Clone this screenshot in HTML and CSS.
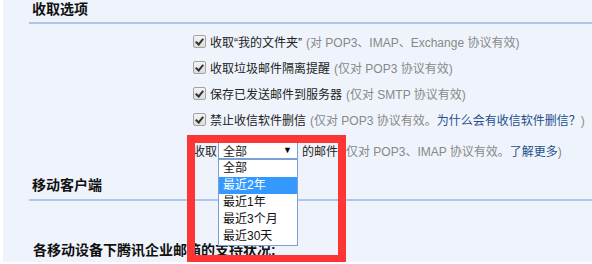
FILE: index.html
```html
<!DOCTYPE html>
<html lang="zh-CN">
<head>
    <meta charset="UTF-8">
    <title>收取选项</title>
    <link rel="stylesheet" href="styles.css">
</head>
<body>

<div class="page">
    <section class="group">
        <h2 class="group-title">收取选项</h2>
        <ul class="options">
            <li><span class="check"></span><span class="label">收取“我的文件夹”</span> <span class="hint">(对 POP3、IMAP、Exchange 协议有效)</span></li>
            <li><span class="check"></span><span class="label">收取垃圾邮件隔离提醒</span> <span class="hint">(仅对 POP3 协议有效)</span></li>
            <li><span class="check"></span><span class="label">保存已发送邮件到服务器</span> <span class="hint">(仅对 SMTP 协议有效)</span></li>
            <li><span class="check"></span><span class="label">禁止收信软件删信</span> <span class="hint">(仅对 POP3 协议有效。<a class="link">为什么会有收信软件删信？</a>)</span></li>
            <li class="range">
                <span class="label">收取</span>
                <div class="select">
                    <span class="select-value">全部</span>
                    <span class="select-arrow">▼</span>
                    <ul class="select-list">
                        <li>全部</li>
                        <li class="active">最近2年</li>
                        <li>最近1年</li>
                        <li>最近3个月</li>
                        <li>最近30天</li>
                    </ul>
                </div>
                <span class="label">的邮件</span>
                <span class="hint">(仅对 POP3、IMAP 协议有效。<a class="link">了解更多</a>)</span>
            </li>
        </ul>
    </section>

    <section class="group">
        <h2 class="group-title">移动客户端</h2>
        <p class="support">各移动设备下腾讯企业邮箱的支持状况:</p>
    </section>

    <!-- highlight box drawn over the screenshot -->
    <div class="callout"></div>
</div>

</body>
</html>
```

FILE: styles.css
```css
body {
    margin: 0;
    padding: 0;
    background-color: #fff;
    font-family: "Liberation Sans", "Noto Sans CJK SC", sans-serif;
    font-size: 12px;
    color: #222;
}
.page {
    position: relative;
    margin-left: 3px;
    height: 262px;
    background-color: #eff4fc;
    overflow: visible;
}
.group-title {
    margin: 0 0 0 26px;
    padding: 0 0 4px 3px;
    font-size: 14px;
    line-height: 18px;
    font-weight: bold;
    color: #111;
    border-bottom: 2px solid #a9c8ec;
}
.options {
    list-style: none;
    margin: 0;
    padding: 4px 0 0 190px;
}
.options > li {
    display: flex;
    align-items: center;
    height: 26px;
    white-space: nowrap;
}
.check {
    width: 11px;
    height: 11px;
    margin-right: 4px;
    border: 1px solid #a3a3a3;
    border-radius: 2px;
    background: linear-gradient(#f4f4f4, #dcdcdc);
    position: relative;
}
.check::after {
    content: "";
    position: absolute;
    left: 3px;
    top: 1px;
    width: 3px;
    height: 6px;
    border: solid #333;
    border-width: 0 2px 2px 0;
    transform: rotate(40deg);
}
.label {
    color: #222;
}
.hint {
    margin-left: 4px;
    color: #888;
}
.link {
    color: #244f8f;
}
.options > li.range {
    margin-top: 9px;
    height: 18px;
}
.select {
    position: relative;
    width: 78px;
    height: 16px;
    margin: 0 4px 0 1px;
    border: 1px solid #7b9fd6;
    background-color: #fff;
    display: flex;
    align-items: center;
    justify-content: space-between;
}
.select-value {
    padding-left: 4px;
    font-size: 12px;
}
.select-arrow {
    font-size: 9px;
    padding-right: 5px;
    color: #000;
}
.select-list {
    position: absolute;
    left: -1px;
    top: 17px;
    width: 78px;
    margin: 0;
    padding: 0;
    list-style: none;
    background-color: #fff;
    border: 1px solid #7b9fd6;
    z-index: 2;
}
.select-list li {
    height: 17px;
    line-height: 17px;
    padding-left: 4px;
    font-size: 12px;
    color: #111;
}
.select-list li.active {
    background-color: #3399ff;
    color: #fff;
}
.group + .group {
    padding-top: 17px;
}
.group + .group .group-title {
    padding-bottom: 5px;
}
.support {
    margin: 38px 0 0 30px;
    font-size: 14px;
    font-weight: bold;
    color: #111;
}
.callout {
    position: absolute;
    left: 184px;
    top: 135px;
    width: 143px;
    height: 112px;
    border: 8px solid #fd3535;
    z-index: 3;
}
```
